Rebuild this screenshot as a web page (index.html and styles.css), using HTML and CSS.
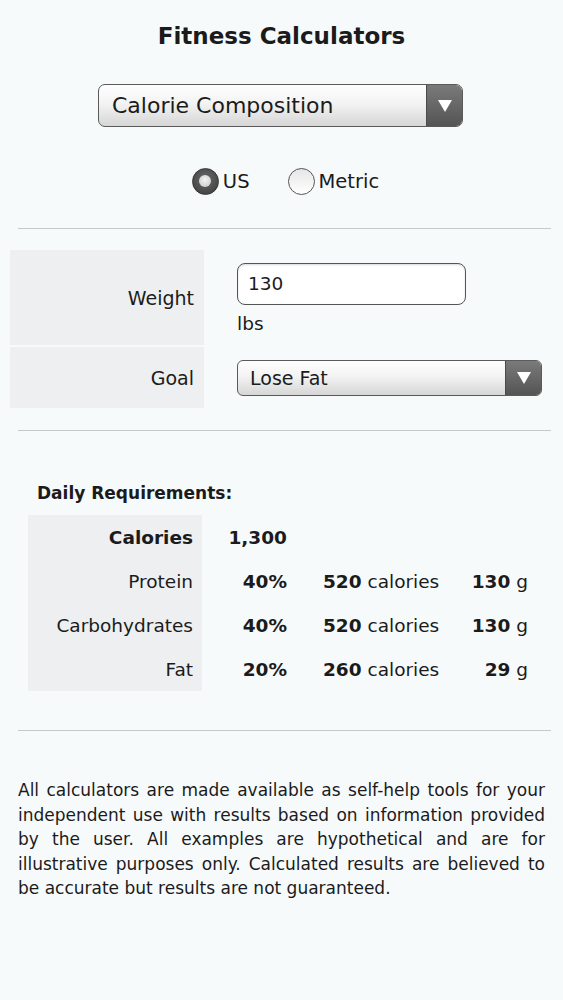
FILE: index.html
```html
<!DOCTYPE html>
<html>
<head>
<meta charset="utf-8">
<title>Fitness Calculators</title>
<link rel="stylesheet" href="styles.css">
</head>
<body>
<div class="page">
  <h1 class="title">Fitness Calculators</h1>

  <div class="select select-main">
    <span class="select-text">Calorie Composition</span>
    <span class="select-arrow"><span class="tri"></span></span>
  </div>

  <div class="units">
    <label class="radio-item"><span class="radio radio-on"><span class="dot"></span></span><span>US</span></label>
    <label class="radio-item"><span class="radio"></span><span>Metric</span></label>
  </div>

  <div class="rule"></div>

  <div class="form">
    <div class="label-cell row-weight">Weight</div>
    <div class="value-cell row-weight">
      <div class="text-input">130</div>
      <div class="unit">lbs</div>
    </div>
    <div class="label-cell row-goal">Goal</div>
    <div class="value-cell row-goal goal-cell">
      <div class="select select-goal">
        <span class="select-text">Lose Fat</span>
        <span class="select-arrow"><span class="tri"></span></span>
      </div>
    </div>
  </div>

  <div class="rule rule-2"></div>

  <h2 class="section-title">Daily Requirements:</h2>

  <div class="results">
    <div class="r-label strong">Calories</div>
    <div class="r-num strong">1,300</div>
    <div class="r-cal"></div>
    <div class="r-g"></div>

    <div class="r-label">Protein</div>
    <div class="r-num strong">40%</div>
    <div class="r-cal"><span><b>520</b> calories</span></div>
    <div class="r-g"><span><b>130</b> g</span></div>

    <div class="r-label">Carbohydrates</div>
    <div class="r-num strong">40%</div>
    <div class="r-cal"><span><b>520</b> calories</span></div>
    <div class="r-g"><span><b>130</b> g</span></div>

    <div class="r-label">Fat</div>
    <div class="r-num strong">20%</div>
    <div class="r-cal"><span><b>260</b> calories</span></div>
    <div class="r-g"><span><b>29</b> g</span></div>
  </div>

  <div class="rule rule-3"></div>

  <p class="disclaimer">All calculators are made available as self-help tools for your independent use with results based on information provided by the user. All examples are hypothetical and are for illustrative purposes only. Calculated results are believed to be accurate but results are not guaranteed.</p>
</div>
</body>
</html>
```

FILE: styles.css
```css
html, body {
  margin: 0;
  padding: 0;
  background: #f7fafb;
}

body {
  font-family: "DejaVu Sans", "Liberation Sans", sans-serif;
  color: #1b1b1b;
}

.page {
  width: 563px;
  padding-top: 20px;
}

.title {
  margin: 0;
  font-size: 23px;
  line-height: 32px;
  text-align: center;
  font-weight: bold;
}

.select {
  display: flex;
  box-sizing: border-box;
  border: 1px solid #5a5a5a;
  border-radius: 7px;
  background: linear-gradient(#fefefe 0%, #f3f3f3 45%, #d6d6d6 100%);
  overflow: hidden;
  align-items: stretch;
}

.select-main {
  width: 365px;
  height: 43px;
  margin: 32px 0 0 98px;
}

.select-text {
  flex: 1;
  display: flex;
  align-items: center;
  padding-left: 13px;
  font-size: 22px;
}

.select-arrow {
  width: 35px;
  background: linear-gradient(#7a7a7a, #545454);
  display: flex;
  align-items: center;
  justify-content: center;
  border-left: 1px solid #4a4a4a;
}

.tri {
  width: 0;
  height: 0;
  border-left: 7px solid transparent;
  border-right: 7px solid transparent;
  border-top: 12px solid #ffffff;
}

.units {
  display: flex;
  justify-content: center;
  gap: 38px;
  margin-top: 39px;
  height: 30px;
  align-items: center;
  font-size: 19.5px;
  padding-left: 8px;
}

.radio-item {
  display: flex;
  align-items: center;
  gap: 4px;
}

.radio {
  box-sizing: border-box;
  width: 27px;
  height: 27px;
  border-radius: 50%;
  border: 1px solid #555;
  background: linear-gradient(#e6e6e6, #ffffff);
  display: flex;
  align-items: center;
  justify-content: center;
}

.radio-on {
  background: radial-gradient(circle at 50% 40%, #6a6a6a, #3a3a3a);
  border-color: #333;
}

.dot {
  width: 12px;
  height: 12px;
  border-radius: 50%;
  background: radial-gradient(circle at 50% 40%, #f4f4f4, #c4c4c4);
}

.rule {
  margin: 32px 12px 0 18px;
  border-top: 1px solid #c6c8c9;
}

.form {
  display: grid;
  grid-template-columns: 194px 1fr;
  grid-template-rows: 95px 61px;
  row-gap: 2px;
  margin: 21px 0 0 10px;
}

.label-cell {
  background: #eeeff0;
  display: flex;
  align-items: center;
  justify-content: flex-end;
  padding-right: 10px;
  font-size: 19px;
}

.value-cell {
  padding-left: 33px;
}

.row-weight.value-cell {
  padding-top: 13px;
}

.text-input {
  box-sizing: border-box;
  width: 229px;
  height: 42px;
  border: 1px solid #555;
  border-radius: 8px;
  background: #ffffff;
  padding: 9px 0 0 10px;
  font-size: 18.5px;
  box-shadow: inset 0 1px 2px rgba(0, 0, 0, 0.15);
}

.unit {
  font-size: 18.5px;
  line-height: 24px;
  margin-top: 7px;
}

.goal-cell {
  display: flex;
  align-items: center;
}

.select-goal {
  width: 305px;
  height: 36px;
  border-radius: 6px;
}

.select-goal .select-text {
  padding-left: 12px;
  font-size: 19px;
}

.select-goal .select-arrow {
  width: 35px;
}

.rule-2 {
  margin-top: 22px;
}

.section-title {
  margin: 50px 0 0 37px;
  font-size: 17px;
  line-height: 24px;
  font-weight: bold;
}

.results {
  display: grid;
  grid-template-columns: 174px 95px 152px 89px;
  grid-auto-rows: 44px;
  margin: 10px 0 0 28px;
  font-size: 18.5px;
}

.results > div {
  display: flex;
  align-items: center;
}

.r-label {
  background: #eeeff0;
  justify-content: flex-end;
  padding-right: 9px;
}

.r-num {
  justify-content: flex-end;
  padding-right: 10px;
}

.r-cal {
  padding-left: 26px;
}

.r-g {
  justify-content: flex-end;
  padding-right: 10px;
}

.results b,
.strong {
  font-weight: bold;
}

.rule-3 {
  margin-top: 39px;
}

.disclaimer {
  margin: 47px 18px 0 18px;
  font-size: 17px;
  line-height: 24.5px;
  text-align: justify;
}
```
